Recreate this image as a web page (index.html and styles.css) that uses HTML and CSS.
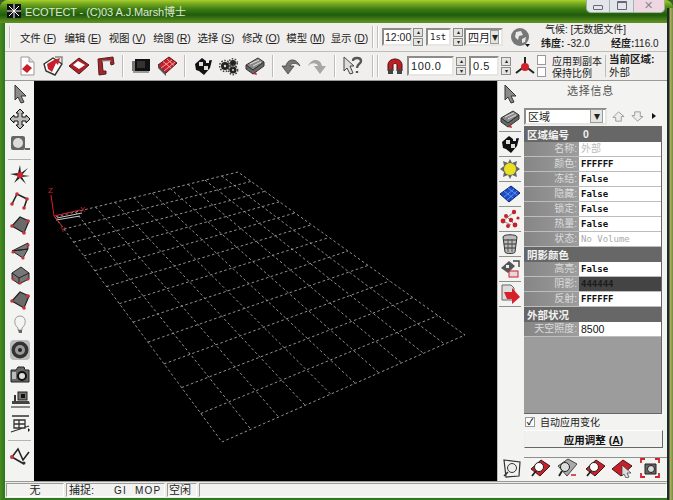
FILE: index.html
```html
<!DOCTYPE html>
<html lang="zh">
<head>
<meta charset="utf-8">
<title>ECOTECT</title>
<link rel="stylesheet" href="styles.css">
</head>
<body>
<svg class="defs" aria-hidden="true">
  <symbol id="pointer" viewBox="0 0 20 20"><path d="M5 1 L16 12 L11 12 L14 18 L11 19 L8 13 L5 16Z" fill="#8a8a8a" stroke="#333" stroke-width="1"/></symbol>
  <symbol id="doc" viewBox="0 0 20 20"><path d="M4 1H12L17 6V19H4Z" fill="#fff" stroke="#999"/><path d="M12 1V6H17" fill="#ddd" stroke="#999"/><path d="M10 8L15 12L10 17L5 13Z" fill="#c8202a"/></symbol>
  <symbol id="open" viewBox="0 0 20 20"><path d="M1 8L10 2L19 8L12 19L3 15Z" fill="#fff" stroke="#333" stroke-width="1.4"/><path d="M4 8L11 4L17 2L15 9L13 7L9 16L5 13Z" fill="#c8202a"/><path d="M12 1H19V7" fill="none" stroke="#888" stroke-width="1.5"/></symbol>
  <symbol id="save" viewBox="0 0 20 20"><path d="M10 2L20 9L10 18L0 10Z" fill="#b01e28" stroke="#4a1a1a"/><path d="M9 5L16 9L10 13L4 9Z" fill="#fff"/></symbol>
  <symbol id="print" viewBox="0 0 20 20"><path d="M3 3L18 1L19 8L16 9L15 4L7 5L8 15L11 15L11 18L4 19Z" fill="#a8242a" stroke="#4a2222"/><path d="M7 5H16" stroke="#bbb"/></symbol>
  <symbol id="film" viewBox="0 0 20 20"><rect x="1" y="5" width="3" height="10" fill="#777"/><rect x="4" y="3" width="15" height="12" fill="#111"/><rect x="6" y="5" width="8" height="7" fill="#333"/><path d="M2 16H18" stroke="#999" stroke-width="2"/></symbol>
  <symbol id="tile" viewBox="0 0 20 20"><path d="M1 9L12 1L20 7L9 17Z" fill="#c8202a" stroke="#5a1414"/><path d="M1 9L9 17V20L1 12Z" fill="#555"/><path d="M6 5.5L14 12M10 3L17 9.5M4 12L15 4M7 15L18 6" stroke="#f3c0c0" stroke-width=".8"/></symbol>
  <symbol id="flower" viewBox="0 0 20 20"><path d="M2 8L9 2L13 5L19 4L17 12L11 19L6 15L3 14Z" fill="#111"/><path d="M6 6H10V10H6ZM11 10H15V14H11Z" fill="#ddd"/><path d="M13 4H16V7H13Z" fill="#eee"/></symbol>
  <symbol id="gears" viewBox="0 0 20 20"><g fill="#222"><circle cx="6" cy="10" r="4"/><circle cx="14" cy="7" r="3"/><circle cx="14" cy="14" r="3.5"/></g><g fill="none" stroke="#444" stroke-dasharray="1.5 1.5" stroke-width="1.6"><circle cx="6" cy="10" r="5.4"/><circle cx="14" cy="7" r="4.2"/><circle cx="14" cy="14" r="4.6"/></g><g fill="#ddd"><circle cx="6" cy="10" r="1.2"/><circle cx="14" cy="14" r="1"/></g></symbol>
  <symbol id="stack" viewBox="0 0 20 20"><path d="M1 9L13 2L19 6L8 14Z" fill="#888" stroke="#333"/><path d="M1 9L8 14L19 6V10L8 18L1 13Z" fill="#666" stroke="#333"/><path d="M5 8L14 4M8 10L16 6" stroke="#ddd"/><path d="M8 18L11 16L12 19Z" fill="#c8202a"/></symbol>
  <symbol id="undo" viewBox="0 0 20 20"><path d="M7 18L1 10H5C6 3 15 1 19 10C15 6 10 7 9 10H13Z" fill="#777" stroke="#333" stroke-width=".7"/></symbol>
  <symbol id="redo" viewBox="0 0 20 20"><path d="M13 18L19 10H15C14 3 5 1 1 10C5 6 10 7 11 10H7Z" fill="#a6a6a6"/></symbol>
  <symbol id="help" viewBox="0 0 20 20"><path d="M1 1L11 10H7L10 17L7 18L4 12L1 15Z" fill="#ddd" stroke="#444"/><path d="M10 5C10 1 18 1 18 5C18 8 14 8 14 12M14 15V17" fill="none" stroke="#555" stroke-width="2.4"/></symbol>
  <symbol id="magnet" viewBox="0 0 20 20"><path d="M3 15V9C3 1 17 1 17 9V15H12V9C12 7 8 7 8 9V15Z" fill="#c01e24" stroke="#401010"/><path d="M3 13H8V18H3ZM12 13H17V18H12Z" fill="#444"/></symbol>
  <symbol id="axes" viewBox="0 0 20 20"><path d="M10 1V10M10 10L1 17M10 10L19 17" stroke="#222" stroke-width="2"/><circle cx="10" cy="11" r="4" fill="#d0242c"/></symbol>
  <symbol id="globe" viewBox="0 0 20 20"><circle cx="10" cy="10" r="9" fill="#777"/><path d="M6 5L11 4L13 8L9 9L8 13L5 10ZM12 12L16 10L15 15L12 16Z" fill="#e8e8e8"/><path d="M15 17H20L17.5 20Z" fill="#111"/></symbol>
  <symbol id="move" viewBox="0 0 20 20"><path d="M10 0L14 4H12V8H16V6L20 10L16 14V12H12V16H14L10 20L6 16H8V12H4V14L0 10L4 6V8H8V4H6Z" fill="#bbb" stroke="#111"/></symbol>
  <symbol id="tape" viewBox="0 0 20 20"><rect x="1" y="2" width="14" height="14" rx="2" fill="#666"/><circle cx="8" cy="9" r="5" fill="#ddd"/><path d="M15 15H20" stroke="#333" stroke-width="1.5"/></symbol>
  <symbol id="star" viewBox="0 0 20 20"><path d="M10 0L11 8L18 3L12 10L20 11L12 12L16 19L10 13L4 18L8 11L0 9L8 8Z" fill="#222"/><circle cx="10" cy="10" r="3" fill="#d0242c"/></symbol>
  <symbol id="poly" viewBox="0 0 20 20"><path d="M2 14L7 4L17 9L14 18" fill="none" stroke="#222" stroke-width="1.6"/><g fill="#c8303a"><circle cx="2" cy="14" r="1.8"/><circle cx="7" cy="4" r="1.8"/><circle cx="17" cy="9" r="1.8"/><circle cx="14" cy="18" r="1.8"/></g></symbol>
  <symbol id="quad" viewBox="0 0 20 20"><path d="M2 11L10 2L19 6L14 18Z" fill="#6a6a6a" stroke="#222" stroke-width="1.2"/><g fill="#c8303a"><circle cx="2" cy="11" r="1.8"/><circle cx="18" cy="6" r="1.8"/><circle cx="14" cy="18" r="1.8"/></g></symbol>
  <symbol id="zig" viewBox="0 0 20 20"><path d="M2 11L18 3V9L2 11L13 18L18 9Z" fill="#777" stroke="#222"/><g fill="#c8303a"><circle cx="3" cy="12" r="1.6"/><circle cx="18" cy="5" r="1.6"/><circle cx="13" cy="18" r="1.6"/></g></symbol>
  <symbol id="box" viewBox="0 0 20 20"><path d="M2 8L11 2L19 8V14L9 19L2 14Z" fill="#777" stroke="#222"/><path d="M2 8L9 13L19 8M9 13V19" fill="none" stroke="#222"/><g fill="#c8303a"><circle cx="3" cy="14" r="1.5"/><circle cx="10" cy="18" r="1.5"/><circle cx="18" cy="14" r="1.5"/></g></symbol>
  <symbol id="bulb" viewBox="0 0 20 20"><path d="M10 1C4 1 3 9 8 13V15H12V13C17 9 16 1 10 1Z" fill="#f4f4f2" stroke="#999"/><path d="M8 15H12V18H9Z" fill="#666"/></symbol>
  <symbol id="speaker" viewBox="0 0 20 20"><rect x="0" y="0" width="20" height="20" rx="4" fill="#bbb"/><circle cx="10" cy="10" r="8.5" fill="#333"/><circle cx="10" cy="10" r="5" fill="#999"/><circle cx="10" cy="10" r="2" fill="#222"/></symbol>
  <symbol id="camera" viewBox="0 0 20 20"><path d="M1 5H6L8 2H14L15 5H19V17H1Z" fill="#666" stroke="#222"/><circle cx="12" cy="11" r="5" fill="#111"/><circle cx="12" cy="11" r="3" fill="#ddd"/><rect x="2" y="7" width="4" height="7" fill="#bbb"/></symbol>
  <symbol id="pc" viewBox="0 0 20 20"><rect x="8" y="2" width="9" height="8" fill="#777" stroke="#222"/><rect x="11" y="4" width="4" height="4" fill="#111"/><path d="M2 11H19L20 14H2Z" fill="#444"/><path d="M1 16H20V18H1Z" fill="#888"/><path d="M5 5V11" stroke="#333" stroke-width="2"/></symbol>
  <symbol id="stairs" viewBox="0 0 20 20"><path d="M1 17L19 11M2 1L19 1M4 5H15V13H4ZM4 9H15M9 5V13" fill="none" stroke="#333" stroke-width="1.3"/><path d="M18 13L20 15L18 17Z" fill="#111"/></symbol>
  <symbol id="line" viewBox="0 0 20 20"><path d="M2 11L8 3L13 14L19 6M2 11L14 18" fill="none" stroke="#222" stroke-width="1.5"/><circle cx="2" cy="11" r="2" fill="#c8303a"/><circle cx="14" cy="17" r="1.5" fill="#333"/></symbol>
  <symbol id="sun" viewBox="0 0 20 20"><path d="M10 0L12 4L17 2L16 7L20 10L16 13L17 18L12 16L10 20L8 16L3 18L4 13L0 10L4 7L3 2L8 4Z" fill="#666"/><circle cx="10" cy="10" r="6" fill="#e8e020"/></symbol>
  <symbol id="blue" viewBox="0 0 20 20"><path d="M0 10L11 2L20 9L9 18Z" fill="#1c4ec8" stroke="#0c2270"/><path d="M4 7L13 14M8 4L17 11M4 13L14 5M7 16L17 7" stroke="#6a96ee" stroke-width=".9"/></symbol>
  <symbol id="dots" viewBox="0 0 20 20"><path d="M3 12L14 3M6 7L15 16M3 12L11 16" stroke="#888"/><g fill="#c8202a"><circle cx="3" cy="12" r="2.4"/><circle cx="14" cy="3" r="2.2"/><circle cx="6" cy="7" r="2"/><circle cx="15" cy="16" r="2.4"/><circle cx="11" cy="11" r="2.2"/><circle cx="8" cy="17" r="2"/><circle cx="18" cy="9" r="1.6"/></g></symbol>
  <symbol id="bin" viewBox="0 0 20 20"><path d="M3 3C3 0 17 0 17 3L15 18C15 20 5 20 5 18Z" fill="#bbb" stroke="#333"/><path d="M4 6H16M4 10H16M5 14H15" stroke="#333"/><path d="M8 5V18M12 5V18" stroke="#555"/></symbol>
  <symbol id="combo" viewBox="0 0 20 20"><path d="M1 9L9 2L15 7L8 14Z" fill="#555"/><path d="M6 6H9V9H6Z" fill="#eee"/><rect x="9" y="12" width="9" height="6" fill="#e6d8d8" stroke="#c8202a"/><path d="M13 2H19V8" fill="none" stroke="#444" stroke-width="1.4"/></symbol>
  <symbol id="export" viewBox="0 0 20 20"><path d="M2 1H11L14 4V16H2Z" fill="#ddd" stroke="#666"/><path d="M4 8L12 8L12 4L20 13L12 20L12 15L7 15Z" fill="#d8202a"/></symbol>
  <symbol id="z-all" viewBox="0 0 20 20"><path d="M2 2L18 4L17 18L4 19Z" fill="none" stroke="#333" stroke-width="1.2"/><circle cx="10" cy="10" r="4.5" fill="#eee" stroke="#333"/><path d="M6 14L2 18" stroke="#333" stroke-width="1.6"/></symbol>
  <symbol id="z-red" viewBox="0 0 20 20"><path d="M1 11L11 2L20 8L10 18Z" fill="#c8202a" stroke="#441414"/><circle cx="9" cy="9" r="4.5" fill="#fff" stroke="#222"/><path d="M6 13L2 18" stroke="#222" stroke-width="1.8"/></symbol>
  <symbol id="z-gray" viewBox="0 0 20 20"><path d="M1 8L11 1L20 6L10 18Z" fill="#aaa" stroke="#444"/><circle cx="8" cy="9" r="4.5" fill="#ddd" stroke="#222"/><path d="M5 13L2 18" stroke="#222" stroke-width="1.8"/><path d="M14 17H19" stroke="#c8202a" stroke-width="1.5"/></symbol>
  <symbol id="z-hand" viewBox="0 0 20 20"><path d="M0 11L11 2L20 8L9 18Z" fill="#c8202a" stroke="#441414"/><path d="M10 7L19 15L15 15L17 19L14 20L12 16L10 18Z" fill="#ddd" stroke="#333" stroke-width=".7"/></symbol>
  <symbol id="z-cam" viewBox="0 0 20 20"><path d="M5 6H16V16H5Z" fill="#666" stroke="#222"/><circle cx="11" cy="11" r="3.5" fill="#ddd" stroke="#222"/><path d="M1 5V1H5M15 1H19V5M1 15V19H5M15 19H19V15" fill="none" stroke="#d0242c" stroke-width="1.8"/></symbol>
  <symbol id="arrow-up" viewBox="0 0 14 14"><path d="M7 2L13 7H10V12H4V8H1Z" fill="#eee" stroke="#999"/></symbol>
  <symbol id="arrow-down" viewBox="0 0 14 14"><path d="M7 12L13 7H10V2H4V6H1Z" fill="#eee" stroke="#999"/></symbol>
</svg>

<div class="window">
  <header class="titlebar">
    <svg class="appicon" viewBox="0 0 14 14"><rect width="14" height="14" fill="#111"/><path d="M7 0V14M0 7H14M2 2L12 12M12 2L2 12" stroke="#fff" stroke-width="1"/></svg>
    <span class="title">ECOTECT - (C)03 A.J.Marsh博士</span>
    <div class="caption">
      <span class="capbtn"><i class="cap-min"></i></span>
      <span class="capbtn"><i class="cap-max"></i></span>
      <span class="capbtn capclose">✕</span>
    </div>
  </header>
  <div class="client">
    <div class="bar menubar">
      <span class="grip"></span>
      <nav class="menus">
        <span>文件 (<u>F</u>)</span><span>编辑 (<u>E</u>)</span><span>视图 (<u>V</u>)</span><span>绘图 (<u>R</u>)</span><span>选择 (<u>S</u>)</span><span>修改 (<u>O</u>)</span><span>模型 (<u>M</u>)</span><span>显示 (<u>D</u>)</span>
      </nav>
      <span class="sep first"></span><span class="grip second"></span>
      <span class="field time">12:00</span><span class="spin tight"><b>▴</b><b>▾</b></span>
      <span class="field day">1st</span><span class="spin"><b>▴</b><b>▾</b></span>
      <span class="field month">四月<em class="drop">▾</em></span>
      <svg class="ic globe"><use href="#globe"/></svg>
      <div class="climate">
        <div class="climate-a">气候: [无数据文件]</div>
        <div class="climate-b"><strong>纬度:</strong> -32.0<span class="gap"></span><strong>经度:</strong>116.0</div>
      </div>
    </div>
    <div class="bar toolbar">
      <span class="tool"><svg class="ic"><use href="#doc"/></svg></span>
      <span class="tool"><svg class="ic"><use href="#open"/></svg></span>
      <span class="tool"><svg class="ic"><use href="#save"/></svg></span>
      <span class="tool"><svg class="ic"><use href="#print"/></svg></span>
      <span class="sep"></span>
      <span class="tool"><svg class="ic"><use href="#film"/></svg></span>
      <span class="tool"><svg class="ic"><use href="#tile"/></svg></span>
      <span class="sep"></span>
      <span class="tool"><svg class="ic"><use href="#flower"/></svg></span>
      <span class="tool"><svg class="ic"><use href="#gears"/></svg></span>
      <span class="tool"><svg class="ic"><use href="#stack"/></svg></span>
      <span class="sep"></span>
      <span class="tool"><svg class="ic"><use href="#undo"/></svg></span>
      <span class="tool"><svg class="ic"><use href="#redo"/></svg></span>
      <span class="sep"></span>
      <span class="tool"><svg class="ic"><use href="#help"/></svg></span>
      <span class="sep wide"></span><span class="grip second"></span>
      <svg class="ic magnet"><use href="#magnet"/></svg>
      <span class="field snap-a">100.0</span><span class="spin"><b>▴</b><b>▾</b></span>
      <span class="field snap-b">0.5</span><span class="spin"><b>▴</b><b>▾</b></span>
      <svg class="ic axes"><use href="#axes"/></svg>
      <div class="checks">
        <label class="check"><i class="box"></i>应用到副本</label>
        <label class="check"><i class="box"></i>保持比例</label>
      </div>
      <span class="vline"></span>
      <div class="zone"><strong>当前区域:</strong><span>外部</span></div>
    </div>
    <main class="work">
      <aside class="lefttools">
        <svg class="ic lt"><use href="#pointer"/></svg>
        <svg class="ic lt"><use href="#move"/></svg>
        <svg class="ic lt"><use href="#tape"/></svg>
        <span class="hsep"></span>
        <svg class="ic lt"><use href="#star"/></svg>
        <svg class="ic lt"><use href="#poly"/></svg>
        <svg class="ic lt"><use href="#quad"/></svg>
        <svg class="ic lt"><use href="#zig"/></svg>
        <svg class="ic lt"><use href="#box"/></svg>
        <svg class="ic lt"><use href="#quad"/></svg>
        <svg class="ic lt"><use href="#bulb"/></svg>
        <svg class="ic lt"><use href="#speaker"/></svg>
        <svg class="ic lt"><use href="#camera"/></svg>
        <svg class="ic lt"><use href="#pc"/></svg>
        <svg class="ic lt"><use href="#stairs"/></svg>
        <span class="hsep"></span>
        <svg class="ic lt"><use href="#line"/></svg>
      </aside>
      <section class="viewport">
        <svg class="scene" viewBox="34 81 463 400">
          <g class="grid">
            <path d="M55 217L222 442L465 335L238 172Z"/>
            <path d="M75.5 212L250.9 429.3M95.5 207L278.6 417M114.9 202.3L305.2 405.3M133.8 197.6L330.7 394.1M152.3 193.1L355.3 383.3M170.3 188.6L378.9 372.9M187.9 184.3L401.6 362.9M205 180.1L423.5 353.3M221.7 176L444.6 344"/>
            <path d="M64 229.1L251.1 181.4M73.6 242.1L264.9 191.3M83.9 255.9L279.5 201.8M94.8 270.7L295 213M106.6 286.6L311.5 224.8M119.3 303.7L329.2 237.5M133 322.2L348 251M147.9 342.1L368.1 265.4M164 363.9L389.7 280.9M181.6 387.6L412.9 297.6M200.8 413.5L437.9 315.6"/>
          </g>
          <path class="origin" d="M57 218L82 213M56 220L80 216"/>
          <path class="axis" d="M51 195L54 216L80 210M54 216L62 226"/>
          <text class="axis-label" x="48" y="193">Z</text>
          <text class="axis-label" x="80" y="212">X</text>
          <text class="axis-label" x="60" y="232">Y</text>
        </svg>
      </section>
      <aside class="panel">
        <div class="tabs">
          <svg class="ic tabarrow"><use href="#pointer"/></svg>
          <span class="tab"><svg class="ic"><use href="#stack"/></svg></span>
          <span class="tab"><svg class="ic"><use href="#flower"/></svg></span>
          <span class="tab"><svg class="ic"><use href="#sun"/></svg></span>
          <span class="tab"><svg class="ic"><use href="#blue"/></svg></span>
          <span class="tab"><svg class="ic"><use href="#dots"/></svg></span>
          <span class="tab"><svg class="ic"><use href="#bin"/></svg></span>
          <span class="tab"><svg class="ic"><use href="#combo"/></svg></span>
          <span class="tab"><svg class="ic"><use href="#export"/></svg></span>
        </div>
        <div class="inspector">
          <h2 class="ptitle">选择信息</h2>
          <div class="selrow">
            <span class="field sel">区域<em class="drop">▾</em></span>
            <svg class="mini"><use href="#arrow-up"/></svg>
            <svg class="mini"><use href="#arrow-down"/></svg>
            <span class="tri"></span>
          </div>
          <div class="sheet">
            <div class="head"><span>区域编号</span><span class="headval">0</span></div>
            <div class="row"><span class="k">名称:</span><span class="v dim cjk">外部</span></div>
            <div class="row"><span class="k">颜色:</span><span class="v">FFFFFF</span></div>
            <div class="row"><span class="k">冻结:</span><span class="v">False</span></div>
            <div class="row"><span class="k">隐藏:</span><span class="v">False</span></div>
            <div class="row"><span class="k">锁定:</span><span class="v">False</span></div>
            <div class="row"><span class="k">热量:</span><span class="v">False</span></div>
            <div class="row"><span class="k">状态:</span><span class="v dim">No Volume</span></div>
            <div class="head"><span>阴影颜色</span></div>
            <div class="row"><span class="k">高亮:</span><span class="v">False</span></div>
            <div class="row"><span class="k">阴影:</span><span class="v dark">444444</span></div>
            <div class="row"><span class="k">反射:</span><span class="v">FFFFFF</span></div>
            <div class="head"><span>外部状况</span></div>
            <div class="row"><span class="k">天空照度:</span><span class="v plain">8500</span></div>
          </div>
          <label class="auto"><i class="box on">✓</i>自动应用变化</label>
          <button class="apply" type="button">应用调整 (<u>A</u>)</button>
        </div>
        <div class="zooms">
          <svg class="ic"><use href="#z-all"/></svg>
          <svg class="ic"><use href="#z-red"/></svg>
          <svg class="ic"><use href="#z-gray"/></svg>
          <svg class="ic"><use href="#z-red"/></svg>
          <svg class="ic"><use href="#z-hand"/></svg>
          <svg class="ic"><use href="#z-cam"/></svg>
        </div>
      </aside>
    </main>
    <footer class="status">
      <span class="cell c1">无</span>
      <span class="cell c2"><span>捕捉:</span><span class="snapflags">GI&nbsp;&nbsp;MOP</span></span>
      <span class="cell c3">空闲</span>
      <span class="cell c4"></span>
    </footer>
  </div>
  <div class="desk"></div>
</div>
</body>
</html>
```

FILE: styles.css
```css
* { box-sizing: border-box; }
html, body { margin: 0; height: 100%; overflow: hidden; background: #3c5a2a; }
body { font: 11px "Liberation Sans", "Noto Sans CJK SC", sans-serif; color: #222; }
.defs { display: none; }

.window {
  width: 673px; height: 500px; overflow: hidden; display: flex; flex-direction: column;
  background: linear-gradient(90deg, #4c8a22 0, #2f7a1c 4px, #2f7a1c 100%);
  border-radius: 8px 8px 0 0;
  position: relative;
}
.desk {
  position: absolute; top: 8px; right: 0; bottom: 0; width: 6px;
  background: linear-gradient(90deg, #1d2a2c 0, #1d2a2c 2px, #b9b35a 3px, #6f8a48 100%);
}

/* title bar */
.titlebar {
  height: 23px; flex: none; display: flex; align-items: center; padding: 0 8px 2px 7px;
  background: linear-gradient(180deg, #a8cf2c 0, #7fb022 3px, #3e7c14 9px, #1f5c0c 15px, #5d8f1e 22px);
}
.appicon { width: 14px; height: 14px; margin-right: 4px; }
.title { color: #dfe8d2; font-size: 11px; letter-spacing: -.1px; white-space: nowrap; }
.caption {
  margin: -2px 0 0 auto; align-self: flex-start; display: flex; height: 15px; width: 79px;
  background: #e2e6ea; border: 1px solid #9fb09a; border-top: 0; border-radius: 0 0 5px 5px;
}
.capbtn { flex: 1; display: flex; align-items: center; justify-content: center; font-size: 9px; color: #888; border-right: 1px solid #a9b4ae; }
.capclose { background: #eed6e2; border-right: 0; flex: 1.35; border-radius: 0 0 5px 0; font-size: 11px; }
.cap-min { width: 10px; height: 5px; margin-top: 4px; border: 1px solid #667; border-radius: 1px; }
.cap-max { width: 10px; height: 9px; border: 1px solid #667; border-top-width: 2px; border-radius: 1px; }

/* client */
.client { flex: 1; min-height: 0; margin: 0 6px 2px 5px; display: flex; flex-direction: column; background: #f0efed; }
.bar { display: flex; align-items: center; flex: none; border-bottom: 1px solid #bdbdb8; }
.menubar { height: 29px; padding-left: 4px; }
.toolbar { height: 29px; padding-left: 9px; border-bottom: 1px solid #9a9a96; }
.grip { width: 2px; height: 22px; border-left: 1px solid #c2c2bc; background: #fff; flex: none; }
.menus { display: flex; margin-left: 9px; width: 351px; }
.menus span { width: 44.4px; flex: none; font-size: 10.5px; white-space: nowrap; letter-spacing: -.2px; }
.sep { width: 2px; height: 22px; margin: 0 4px; flex: none; border-left: 1px solid #bdbdb8; background: #fff; background-clip: content-box; }
.sep.first { margin: 0 0 0 1px; }
.sep.wide { margin: 0 0 0 6px; }
.grip.second { margin: 0 4px 0 3px; }
.sep.first + .grip.second { margin-right: 3px; }

.tool { width: 26px; height: 24px; flex: none; display: flex; align-items: center; justify-content: center; }
.ic { width: 20px; height: 20px; flex: none; display: block; filter: blur(.3px); }

.field {
  flex: none; display: flex; align-items: center; height: 18px; padding: 0 2px; background: #fff; font-size: 11px;
  border: 2px solid; border-color: #8c8c88 #e6e6e2 #e6e6e2 #8c8c88; white-space: nowrap;
}
.time { width: 30px; font-size: 10.5px; padding: 0 1px; }
.day { width: 25px; margin-left: 3px; font-family: "DejaVu Sans Mono", monospace; font-size: 9px; }
.month { width: 39px; margin-left: 1px; font-size: 11px; }
.spin { width: 10px; height: 18px; margin-left: 2px; flex: none; display: flex; flex-direction: column; gap: 1px; }
.spin.tight { margin-left: 1px; }
.spin b { flex: 1; display: flex; align-items: center; justify-content: center; background: #e4e4e0; border: 1px solid #8c8c88; font-size: 6px; font-weight: 400; line-height: 1; }
.drop { margin-left: auto; width: 13px; height: 14px; display: flex; align-items: center; justify-content: center; font-style: normal; font-size: 12px; background: #e4e4e0; border: 1px solid #9a9a96; line-height: 1; }
.globe { margin-left: 7px; }
.climate { margin-left: 11px; line-height: 14px; font-size: 10px; white-space: nowrap; }
.climate-a { padding-left: 4px; }
.gap { display: inline-block; width: 21px; }

.magnet { margin-left: 2px; }
.snap-a { width: 47px; margin-left: 2px; height: 20px; letter-spacing: .6px; }
.snap-b { width: 30px; margin-left: 3px; height: 20px; letter-spacing: .6px; }
.axes { margin: 0 2px 0 4px; }
.checks { display: flex; flex-direction: column; }
.check { display: flex; align-items: center; height: 12px; font-size: 10px; white-space: nowrap; }
.box { width: 9px; height: 10px; margin-right: 6px; background: #fff; border: 1px solid #999; flex: none; font-style: normal; }
.vline { width: 1px; height: 22px; margin: 0 3px 0 3px; background: #bdbdb8; flex: none; }
.zone { display: flex; flex-direction: column; line-height: 13px; font-size: 10.5px; white-space: nowrap; }

/* work area */
.work { flex: 1; min-height: 0; display: flex; }
.lefttools { width: 29px; flex: none; display: flex; flex-direction: column; align-items: center; padding-top: 3px; gap: 5px; background: #f3f3f1; }
.hsep { width: 23px; height: 1px; background: #b4b4b0; flex: none; }
.viewport { flex: 1; background: #000; min-width: 0; }
.scene { width: 100%; height: 100%; display: block; }
.grid path { fill: none; stroke: #a0a0a0; stroke-width: .9; stroke-dasharray: 2.6 2.4; }
.origin { fill: none; stroke: #ccc; stroke-width: 1; }
.axis { fill: none; stroke: #d81f2a; stroke-width: 1; }
.axis-label { fill: #d81f2a; font: 8px "Liberation Sans", sans-serif; }

/* right panel */
.panel { width: 170px; flex: none; display: grid; grid-template-columns: 26px 1fr; grid-template-rows: 377px 23px; background: #f3f3f1; border-left: 1px solid #bbb; }
.tabs { display: flex; flex-direction: column; align-items: center; padding: 3px 2px 0 0; }
.tabarrow { margin-bottom: 3px; }
.tab { width: 22px; height: 25px; display: flex; align-items: center; justify-content: center; border-bottom: 1px solid #8f8f8c; flex: none; }
.inspector { display: flex; flex-direction: column; padding-right: 4px; border-bottom: 1px solid #8f8f8c; margin-left: 0; }
.ptitle { margin: 0; height: 25px; line-height: 21px; text-align: center; font-size: 11px; font-weight: 400; color: #555; letter-spacing: .8px; padding-right: 6px; }
.selrow { display: flex; align-items: center; height: 20px; }
.sel { width: 83px; height: 17px; }
.mini { width: 13px; height: 13px; margin-left: 6px; flex: none; }
.sel + .mini { margin-left: 5px; }
.tri { margin-left: 8px; border: 3px solid transparent; border-left: 4px solid #111; border-right: 0; }
.sheet { height: 288px; margin-right: 1px; background: #9c9c9c; border-right: 1px solid #666; border-bottom: 1px solid #666; flex: none; }
.head { height: 15px; display: flex; align-items: center; padding-left: 3px; background: #676767; color: #f2f2f2; font-weight: 700; font-size: 10.5px; }
.head:first-child { height: 16px; }
.headval { margin-left: 14px; }
.row { height: 15px; display: grid; grid-template-columns: 55px 1fr; border-bottom: 1px solid #bdbdbd; }
.k { background: linear-gradient(90deg, #868686, #9d9d9d); color: #dcdcdc; text-align: right; font-size: 10px; line-height: 14px; padding-right: 2px; white-space: nowrap; }
.v { background: #fff; padding-left: 2px; font: 700 9px/14px "DejaVu Sans Mono", monospace; color: #111; }
.v.dim { color: #aaa; font-weight: 400; }
.v.cjk { font-family: "Liberation Sans", "Noto Sans CJK SC", sans-serif; font-size: 10px; color: #bbb; }
.v.dark { background: #444; color: #1c1c1c; }
.v.plain { font: 400 10.5px/14px "Liberation Sans", sans-serif; }
.auto { display: flex; align-items: center; height: 15px; font-size: 10px; flex: none; }
.box.on { width: 10px; height: 10px; margin: 0 5px 0 1px; font-size: 9px; line-height: 8px; font-weight: 700; text-align: center; }
.apply { height: 18px; margin: 1px 0 9px; padding: 0; flex: none; background: #f1f1ef; border: 1px solid; border-color: #fff #666 #666 #eee; font: 700 10.5px "Liberation Sans", "Noto Sans CJK SC", sans-serif; color: #111; }
.zooms { grid-column: 1 / -1; display: flex; justify-content: space-between; padding: 0 7px 0 4px; align-items: flex-start; background: #f3f3f1; }

/* status */
.status { height: 17px; flex: none; display: flex; gap: 2px; padding: 1px 0 1px 1px; background: #ecebe8; border-top: 1px solid #999; font-size: 11px; line-height: 13px; }
.cell { border: 1px solid; border-color: #9c9c98 #fff #fff #9c9c98; background: #f2f2f0; display: flex; align-items: center; }
.c1 { width: 58px; justify-content: center; }
.c2 { width: 99px; padding-left: 2px; }
.snapflags { margin-left: 20px; letter-spacing: 1.2px; font-size: 10px; }
.c3 { width: 30px; padding-left: 1px; }
.c4 { flex: 1; }
```
